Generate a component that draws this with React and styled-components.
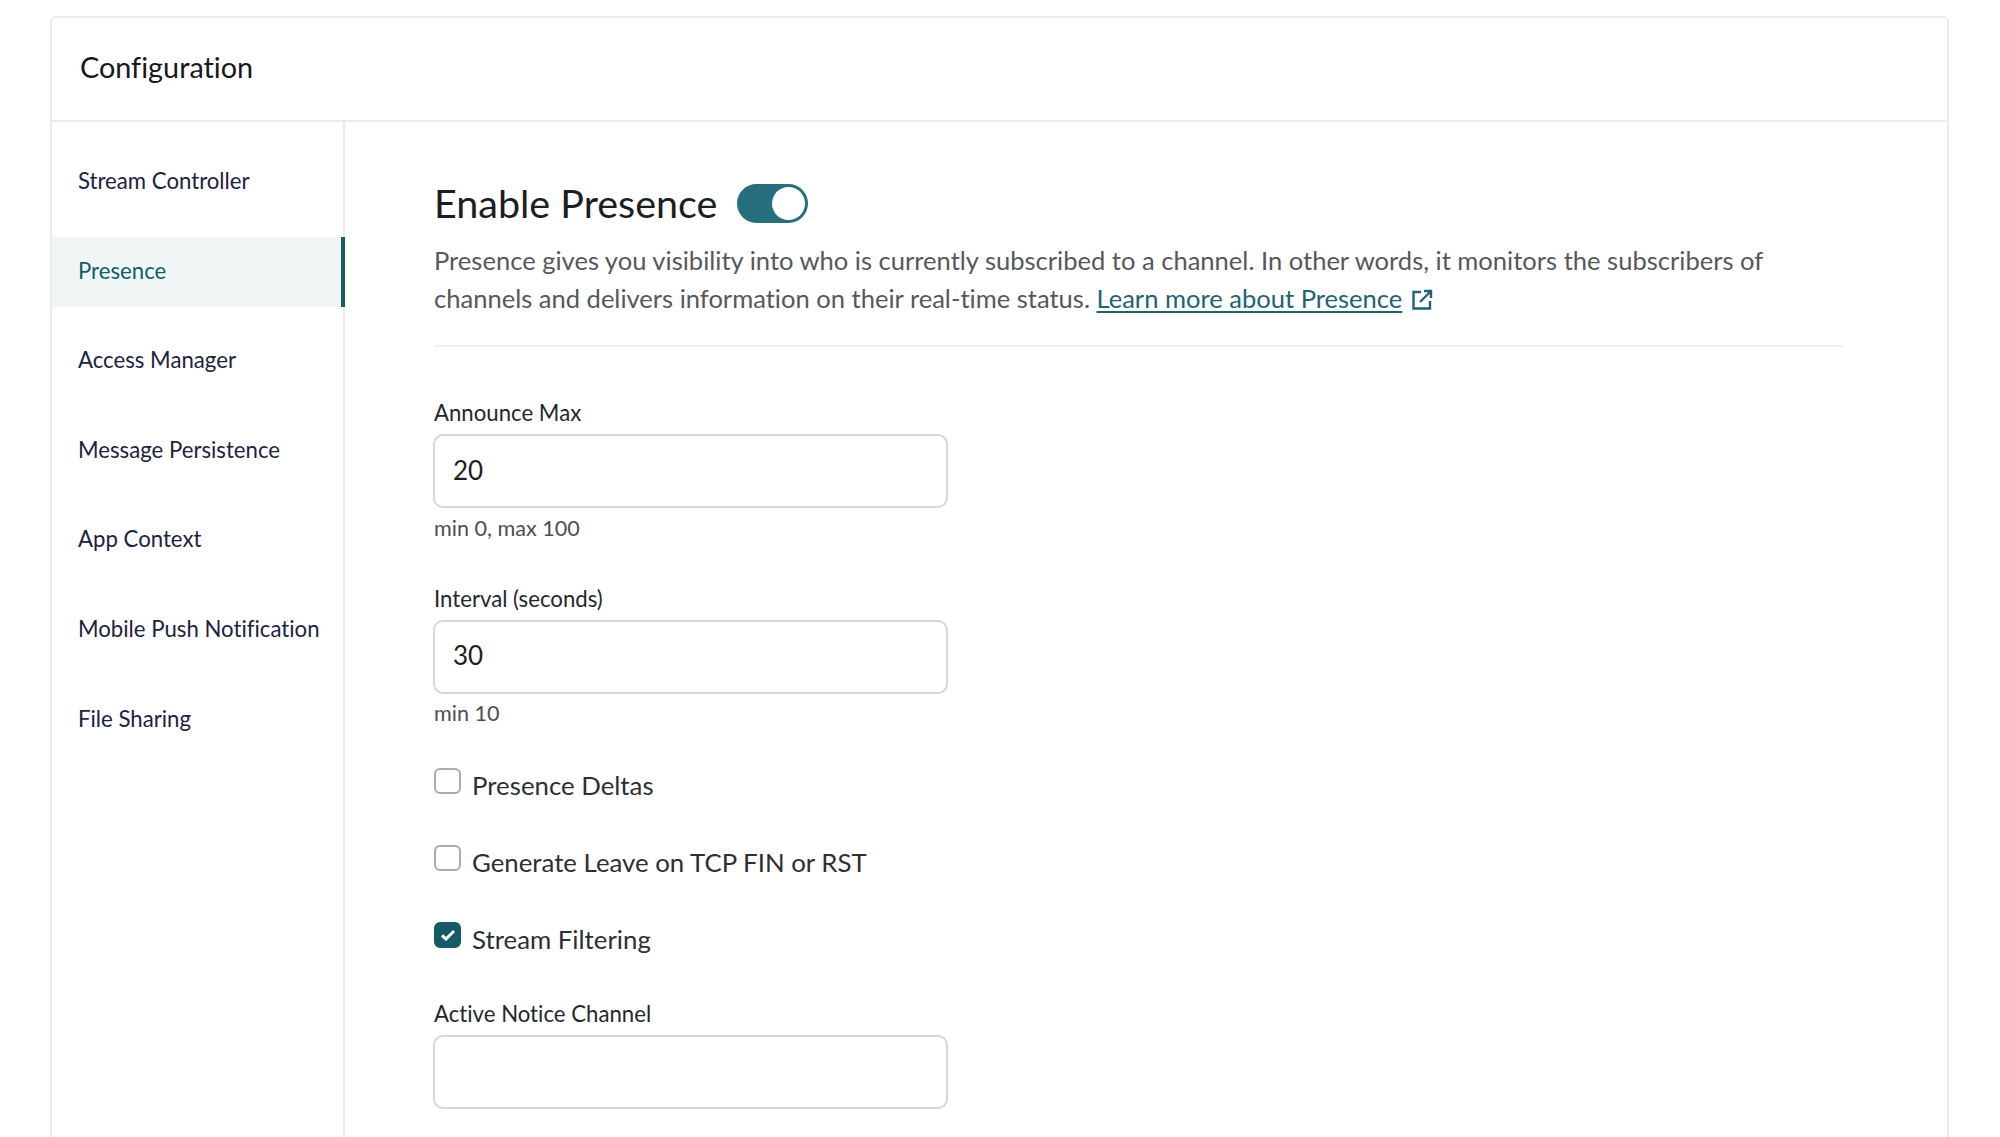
import styled, { createGlobalStyle } from "styled-components";

const GlobalStyle = createGlobalStyle`
  html, body {
    margin: 0;
    padding: 0;
    background: #fff;
    font-family: "Lato", "Liberation Sans", sans-serif;
    font-variant-ligatures: none;
  }
  body {
    height: 1137px;
    overflow: hidden;
  }
`;

const Page = styled.div`
  padding: 16px 51px 0 50px;
`;

const Card = styled.section`
  border: 2px solid #e8ecef;
  border-bottom: 0;
  border-radius: 6px 6px 0 0;
  height: 1121px;
  box-sizing: border-box;
  display: flex;
  flex-direction: column;
`;

const CardHeader = styled.header`
  height: 104px;
  flex: none;
  box-sizing: border-box;
  border-bottom: 2px solid #e8ecef;
  display: flex;
  align-items: center;
  padding: 0 0 5px 28px;
`;

const Title = styled.h1`
  margin: 0;
  font-size: 28.8px;
  font-weight: 400;
  color: #16181c;
`;

const Body = styled.div`
  flex: 1;
  display: flex;
  min-height: 0;
`;

const Sidebar = styled.nav`
  width: 293px;
  flex: none;
  box-sizing: border-box;
  border-right: 2px solid #e8ecef;
  padding-top: 25px;
  display: flex;
  flex-direction: column;
  gap: 19.6px;
`;

const NavItem = styled.a`
  height: 70px;
  flex: none;
  box-sizing: border-box;
  margin-right: -2px;
  padding: 0 0 3px 26px;
  display: flex;
  align-items: center;
  font-size: 22.2px;
  color: ${(p) => (p.$active ? "#155c68" : "#1c2340")};
  background: ${(p) => (p.$active ? "#f0f6f6" : "transparent")};
  border-right: 4px solid ${(p) => (p.$active ? "#155c68" : "transparent")};
`;

const Main = styled.main`
  flex: 1;
  min-width: 0;
  padding: 58px 104px 0 89px;
`;

const HeadingRow = styled.div`
  display: flex;
  align-items: center;
  gap: 20px;
  height: 44px;
`;

const Heading = styled.h2`
  margin: 0;
  font-size: 39.5px;
  font-weight: 400;
  color: #1c1e22;
`;

const Toggle = styled.span`
  width: 71px;
  height: 39px;
  margin-top: 2px;
  box-sizing: border-box;
  border-radius: 20px;
  background: #276f7e;
  display: flex;
  justify-content: flex-end;
  align-items: center;
  padding-right: 3px;

  &::after {
    content: "";
    width: 33px;
    height: 33px;
    border-radius: 50%;
    background: #fff;
  }
`;

const Intro = styled.p`
  margin: 17px 0 0;
  max-width: 1390px;
  font-size: 25.55px;
  line-height: 38px;
  color: #55585c;
`;

const LearnMore = styled.a`
  color: #1f6370;
  text-decoration: underline;
  text-underline-offset: 3px;
`;

const External = styled.svg`
  width: 24px;
  height: 24px;
  margin-left: 8px;
  vertical-align: -4px;
  fill: none;
  stroke: #1f6370;
  stroke-width: 2.4;
`;

const Divider = styled.hr`
  border: 0;
  border-top: 2px solid #eef0f1;
  margin: 28px 0 0;
`;

const Field = styled.div`
  margin-top: ${(p) => p.$top}px;
`;

const FieldLabel = styled.label`
  display: block;
  font-size: 22.2px;
  line-height: 28px;
  color: #24272b;
`;

const TextInput = styled.div`
  width: 515px;
  height: 74px;
  margin: 7px 0 0 -1px;
  box-sizing: border-box;
  border: 2px solid #d4d6d8;
  border-radius: 10px;
  padding: 0 0 3px 18px;
  display: flex;
  align-items: center;
  font-size: 26px;
  color: #1c1f22;
`;

const Hint = styled.div`
  font-size: 21.6px;
  line-height: 28px;
  margin-top: 5.5px;
  color: #4c4f52;
`;

const CheckRow = styled.div`
  display: flex;
  align-items: flex-start;
  gap: 11px;
  height: 37px;
  margin-top: ${(p) => p.$top}px;
`;

const Box = styled.span`
  width: 27px;
  height: 26px;
  margin-top: 1px;
  flex: none;
  box-sizing: border-box;
  border-radius: 6px;
  border: 2px solid ${(p) => (p.$checked ? "#155c68" : "#a9abad")};
  background: ${(p) => (p.$checked ? "#155c68" : "#fff")};
  display: flex;
  align-items: center;
  justify-content: center;
`;

const CheckText = styled.span`
  font-size: 25.8px;
  line-height: 37px;
  color: #2c2f33;
`;

const navItems = [
  "Stream Controller",
  "Presence",
  "Access Manager",
  "Message Persistence",
  "App Context",
  "Mobile Push Notification",
  "File Sharing",
];

export default function App() {
  return (
    <Page>
      <GlobalStyle />
      <Card>
        <CardHeader>
          <Title>Configuration</Title>
        </CardHeader>
        <Body>
          <Sidebar>
            {navItems.map((item) => (
              <NavItem key={item} $active={item === "Presence"}>
                {item}
              </NavItem>
            ))}
          </Sidebar>
          <Main>
            <HeadingRow>
              <Heading>Enable Presence</Heading>
              <Toggle />
            </HeadingRow>
            <Intro>
              Presence gives you visibility into who is currently subscribed to a channel. In other
              words, it monitors the subscribers of channels and delivers information on their
              real-time status. <LearnMore>Learn more about Presence</LearnMore>
              <External viewBox="0 0 24 24">
                <path d="M11 4H3.5v16.5H20V13" />
                <path d="M14 3h7v7M21 3L10 14" />
              </External>
            </Intro>
            <Divider />
            <Field $top={52}>
              <FieldLabel>Announce Max</FieldLabel>
              <TextInput>20</TextInput>
              <Hint>min 0, max 100</Hint>
            </Field>
            <Field $top={43}>
              <FieldLabel>Interval (seconds)</FieldLabel>
              <TextInput>30</TextInput>
              <Hint>min 10</Hint>
            </Field>
            <CheckRow $top={40}>
              <Box />
              <CheckText>Presence Deltas</CheckText>
            </CheckRow>
            <CheckRow $top={40}>
              <Box />
              <CheckText>Generate Leave on TCP FIN or RST</CheckText>
            </CheckRow>
            <CheckRow $top={40}>
              <Box $checked>
                <svg width="16" height="14" viewBox="0 0 16 14" fill="none" stroke="#fff" strokeWidth="3">
                  <path d="M2 7.5l4 3.5 8-8" />
                </svg>
              </Box>
              <CheckText>Stream Filtering</CheckText>
            </CheckRow>
            <Field $top={42}>
              <FieldLabel>Active Notice Channel</FieldLabel>
              <TextInput />
            </Field>
          </Main>
        </Body>
      </Card>
    </Page>
  );
}
